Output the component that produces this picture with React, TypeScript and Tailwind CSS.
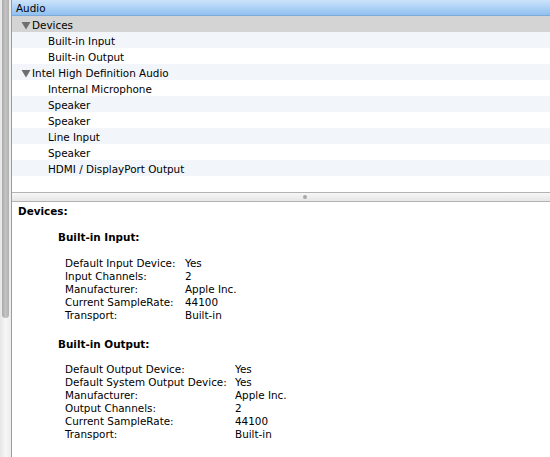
const treeRows: { label: string; level: number; group?: boolean; selected?: boolean }[] = [
  { label: 'Devices', level: 0, group: true, selected: true },
  { label: 'Built-in Input', level: 1 },
  { label: 'Built-in Output', level: 1 },
  { label: 'Intel High Definition Audio', level: 0, group: true },
  { label: 'Internal Microphone', level: 1 },
  { label: 'Speaker', level: 1 },
  { label: 'Speaker', level: 1 },
  { label: 'Line Input', level: 1 },
  { label: 'Speaker', level: 1 },
  { label: 'HDMI / DisplayPort Output', level: 1 },
  { label: '', level: 1 },
]

const inputProps = [
  ['Default Input Device:', 'Yes'],
  ['Input Channels:', '2'],
  ['Manufacturer:', 'Apple Inc.'],
  ['Current SampleRate:', '44100'],
  ['Transport:', 'Built-in'],
]

const outputProps = [
  ['Default Output Device:', 'Yes'],
  ['Default System Output Device:', 'Yes'],
  ['Manufacturer:', 'Apple Inc.'],
  ['Output Channels:', '2'],
  ['Current SampleRate:', '44100'],
  ['Transport:', 'Built-in'],
]

function Triangle() {
  return (
    <svg width="10" height="9" viewBox="0 0 10 9" className="shrink-0">
      <path d="M0.5 1 L9.5 1 L5 8.5 Z" fill="#6e6e6e" />
    </svg>
  )
}

function PropTable({ rows, labelW, mt }: { rows: string[][]; labelW: string; mt: string }) {
  return (
    <div className={`pl-[47px] ${mt}`}>
      {rows.map(([k, v]) => (
        <div key={k} className="flex h-[13px] leading-[13px] whitespace-nowrap">
          <span className={`${labelW} shrink-0`}>{k}</span>
          <span>{v}</span>
        </div>
      ))}
    </div>
  )
}

export default function App() {
  return (
    <div
      className="flex w-[550px] h-[457px] overflow-hidden bg-white text-black text-[10.4px]"
      style={{ fontFamily: '"Lucida Grande", "DejaVu Sans", sans-serif' }}
    >
      {/* scrollbar */}
      <div className="w-[11px] shrink-0 bg-gradient-to-r from-[#e6e6e6] via-[#f6f6f6] to-[#ececec] relative">
        <div className="absolute left-[2px] top-[-8px] w-[7px] h-[326px] rounded-full bg-gradient-to-r from-[#a9a9a9] via-[#c4c4c4] to-[#b0b0b0]" />
      </div>
      <div className="w-[1px] shrink-0 bg-[#9c9c9c]" />

      <div className="flex-1 flex flex-col min-w-0">
        {/* header */}
        <div className="h-[16px] leading-[16px] pl-[4px] bg-gradient-to-b from-[#cde3fa] to-[#8fc0f0] border-b border-[#7fa9d6]">
          Audio
        </div>

        {/* tree */}
        <div className="h-[176px] flex flex-col">
          {treeRows.map((r, i) => (
            <div
              key={i}
              className={`h-[16px] shrink-0 flex items-center pt-[3px] ${
                r.selected ? 'bg-[#d4d4d4]' : i % 2 === 1 ? 'bg-[#f2f5fa]' : 'bg-white'
              } ${r.level === 0 ? 'pl-[9px] gap-[1px]' : 'pl-[36px]'}`}
            >
              {r.group && <Triangle />}
              <span>{r.label}</span>
            </div>
          ))}
        </div>

        {/* splitter */}
        <div className="h-[10px] shrink-0 border-t border-b border-[#b3b3b3] bg-gradient-to-b from-[#f7f7f7] to-[#e6e6e6] flex items-center justify-center">
          <div className="w-[4px] h-[4px] rounded-full bg-[#a8a8a8] ml-[48px]" />
        </div>

        {/* detail */}
        <div className="flex-1 pl-[6px] pt-[2px]">
          <div className="font-bold h-[14px] leading-[14px]">Devices:</div>
          <div className="pl-[40px] mt-[12px] font-bold h-[14px] leading-[14px]">Built-in Input:</div>
          <PropTable rows={inputProps} labelW="w-[120px]" mt="mt-[13px]" />
          <div className="pl-[40px] mt-[15px] font-bold h-[14px] leading-[14px]">Built-in Output:</div>
          <PropTable rows={outputProps} labelW="w-[170px]" mt="mt-[12px]" />
        </div>
      </div>
    </div>
  )
}
